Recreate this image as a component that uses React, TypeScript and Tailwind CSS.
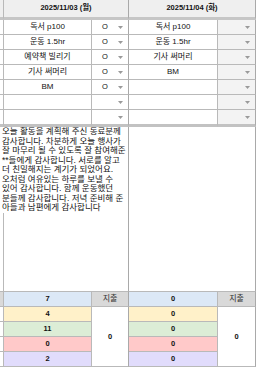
const line = 'border-[#b9b9b9]'
const font = { fontFamily: '"Liberation Sans", "Noto Sans CJK KR", sans-serif' }

const tasks1 = ['독서 p100', '운동 1.5hr', '예약책 빌리기', '기사 써머리', 'BM', '', '']
const checks1 = ['O', 'O', 'O', 'O', 'O', '', '']
const tasks2 = ['독서 p100', '운동 1.5hr', '기사 써머리', 'BM', '', '', '']

const note = [
  '오늘 활동을 계획해 주신 동료분께',
  '감사합니다. 차분하게 오늘 행사가',
  '잘 마무리 될 수 있도록 잘 참여해준',
  '**들에게 감사합니다. 서로를 알고',
  '더 친밀해지는 계기가 되었어요.',
  '오처럼 여유있는 하루를 보낼 수',
  '있어 감사합니다. 함께 운동했던',
  '분들께 감사합니다. 저녁 준비해 준',
  '아들과 남편에게 감사합니다',
]

const colors = ['bg-[#fff1c9]', 'bg-[#dcedd6]', 'bg-[#ffc9c9]', 'bg-[#e1dcfc]']
const sums1 = ['4', '11', '0', '2']
const sums2 = ['0', '0', '0', '0']

function Arrow() {
  return (
    <svg width="5" height="3" viewBox="0 0 5 3" className="shrink-0">
      <path d="M0 0H5L2.5 3Z" fill="#9a9a9a" />
    </svg>
  )
}

export default function App() {
  return (
    <div
      style={font}
      className="grid w-[256px] grid-cols-[4px_88px_37px_89px_38px] bg-white text-[8px] text-[#111]"
    >
      {/* header */}
      <div className={`h-[20px] border-r border-b-[3px] bg-[#efefef] ${line} border-b-[#c6c6c6]`} />
      <div className={`col-span-2 flex h-[20px] items-center justify-center border-r border-b-[3px] bg-[#efefef] pb-[1px] text-[7.5px] font-bold ${line} border-b-[#c6c6c6] border-r-[#a9a9a9]`}>
        2025/11/03 (월)
      </div>
      <div className={`col-span-2 flex h-[20px] items-center justify-center border-r border-b-[3px] bg-[#efefef] pb-[1px] text-[7.5px] font-bold ${line} border-b-[#c6c6c6] border-r-[#a9a9a9]`}>
        2025/11/04 (화)
      </div>

      {/* task rows */}
      {tasks1.map((t, i) => {
        const last = i === tasks1.length - 1
        const h = last ? 'h-[17px] border-b-[3px] border-b-[#c2c2c2]' : 'h-[15px] border-b'
        return (
          <div key={i} className="contents">
            <div className={`${h} border-r ${line}`} />
            <div className={`${h} flex items-center justify-center border-r ${line}`}>{t}</div>
            <div className={`${h} flex items-center justify-between border-r pl-[10px] pr-[5px] text-[7.5px] ${line} border-r-[#a9a9a9]`}>
              <span>{checks1[i]}</span>
              <Arrow />
            </div>
            <div className={`${h} flex items-center justify-center border-r ${line}`}>{tasks2[i]}</div>
            <div className={`${h} flex items-center justify-end border-r bg-[#f3f3f3] pr-[5px] ${line} border-r-[#a9a9a9]`}>
              <Arrow />
            </div>
          </div>
        )
      })}

      {/* note area */}
      <div className={`h-[165px] border-r border-b ${line}`} />
      <div className={`col-span-2 h-[165px] border-r border-b ${line} border-r-[#a9a9a9]`}>
        <div className="relative -ml-[4px] bg-white pl-[2px] text-[8.5px] leading-[9.5px] whitespace-nowrap">
          {note.map((l, i) => (
            <div key={i}>{l}</div>
          ))}
        </div>
      </div>
      <div className={`col-span-2 h-[165px] border-r border-b ${line} border-r-[#a9a9a9]`} />

      {/* totals */}
      <div className={`h-[15px] border-r border-b bg-[#d9d9d9] ${line}`} />
      <div className={`flex h-[15px] items-center justify-center border-r border-b bg-[#dce8f6] text-[7.5px] font-bold ${line}`}>7</div>
      <div className={`flex h-[15px] items-center justify-center border-r border-b bg-[#d9d9d9] text-[#333] ${line} border-r-[#a9a9a9]`}>지출</div>
      <div className={`flex h-[15px] items-center justify-center border-r border-b bg-[#dce8f6] text-[7.5px] font-bold ${line}`}>0</div>
      <div className={`flex h-[15px] items-center justify-center border-r border-b bg-[#d9d9d9] text-[#333] ${line} border-r-[#a9a9a9]`}>지출</div>

      <div className="col-span-5 grid grid-cols-[4px_88px_37px_89px_38px] grid-rows-[15px_15px_15px_15px] text-[7.5px]">
        {colors.map((c, i) => (
          <div key={`a${i}`} className="contents">
            <div className={`border-r border-b ${line}`} style={{ gridColumn: 1, gridRow: i + 1 }} />
            <div
              className={`flex items-center justify-center border-r border-b font-bold ${c} ${line}`}
              style={{ gridColumn: 2, gridRow: i + 1 }}
            >
              {sums1[i]}
            </div>
            <div
              className={`flex items-center justify-center border-r border-b font-bold ${c} ${line}`}
              style={{ gridColumn: 4, gridRow: i + 1 }}
            >
              {sums2[i]}
            </div>
          </div>
        ))}
        <div className={`col-start-3 row-span-4 row-start-1 flex items-center justify-center border-r border-b font-bold ${line} border-r-[#a9a9a9]`}>
          0
        </div>
        <div className={`col-start-5 row-span-4 row-start-1 flex items-center justify-center border-r border-b font-bold ${line} border-r-[#a9a9a9]`}>
          0
        </div>
      </div>
    </div>
  )
}
